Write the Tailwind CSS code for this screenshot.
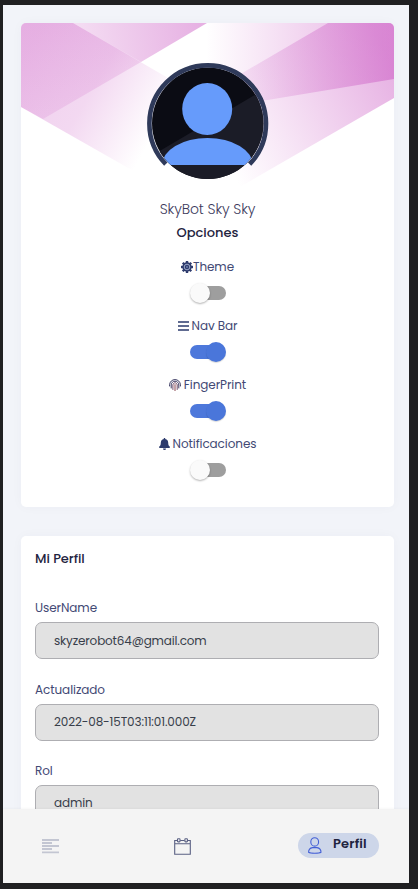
<!DOCTYPE html>
<html lang="es">
<head>
<meta charset="utf-8">
<title>Perfil</title>
<script src="https://cdn.jsdelivr.net/npm/@tailwindcss/browser@4"></script>
</head>
<body class="h-[889px] w-[418px] overflow-hidden bg-[#202022] pl-[3px] pt-[5px] font-['Poppins','Inter',sans-serif] text-[#424974]">
<div class="flex h-[878px] w-[406px] flex-col bg-[#f2f4f9]">
  <main class="h-[804px] overflow-hidden px-[18px] pt-[18px]">
    <section class="h-[484px] w-[373px] overflow-hidden rounded-[5px] bg-white shadow-[0_0_12px_rgba(60,70,110,0.03)]">
      <svg class="block" width="373" height="174" viewBox="0 0 373 174">
        <defs>
          <linearGradient id="a" gradientUnits="userSpaceOnUse" x1="10" y1="20" x2="142" y2="96"><stop offset="0" stop-color="#c850c0" stop-opacity=".28"/><stop offset=".5" stop-color="#c850c0" stop-opacity=".22"/><stop offset="1" stop-color="#c850c0" stop-opacity="0"/></linearGradient>
          <linearGradient id="b" gradientUnits="userSpaceOnUse" x1="186" y1="0" x2="60" y2="20"><stop offset="0" stop-color="#c850c0" stop-opacity=".46"/><stop offset="1" stop-color="#c850c0" stop-opacity=".2"/></linearGradient>
          <linearGradient id="b2" gradientUnits="userSpaceOnUse" x1="0" y1="0" x2="20" y2="100"><stop offset="0" stop-color="#c850c0" stop-opacity=".25"/><stop offset="1" stop-color="#c850c0" stop-opacity=".14"/></linearGradient>
          <linearGradient id="c" gradientUnits="userSpaceOnUse" x1="185" y1="0" x2="373" y2="0"><stop offset="0" stop-color="#c850c0" stop-opacity="0"/><stop offset="1" stop-color="#c850c0" stop-opacity=".46"/></linearGradient>
          <linearGradient id="d" gradientUnits="userSpaceOnUse" x1="202" y1="130" x2="373" y2="47"><stop offset="0" stop-color="#c850c0" stop-opacity="0"/><stop offset="1" stop-color="#c850c0" stop-opacity=".44"/></linearGradient>
          <clipPath id="face"><circle cx="186.7" cy="100.3" r="55.7"/></clipPath>
        </defs>
        <path d="M0 0H52L180 74L160 175L0 84Z" fill="url(#a)"/>
        <path d="M52 0H186L120 39Z" fill="url(#b)"/>
        <path d="M0 0H52L120 39L22 96L0 84Z" fill="url(#b2)"/>
        <path d="M175 0H373V56L175 89Z" fill="url(#c)"/>
        <path d="M307 0H373V75L205 172L170 80Z" fill="url(#d)"/>
        <g clip-path="url(#face)">
          <path d="M130 44H244V157H130Z" fill="#0b0c14"/>
          <path d="M130 133L244 66V160H130Z" fill="#1b1c27"/>
          <ellipse cx="186.2" cy="86" rx="25" ry="26" fill="#669bfb"/>
          <path d="M141 142A45.500 27 0 0 1 232 142Z" fill="#669bfb"/>
        </g>
        <path d="M144.800 141.200A58.300 58.300 0 1 1 228.600 141.200" fill="none" stroke="#2f3a5a" stroke-width="4.600"/>
      </svg>
      <div class="flex h-6 items-center justify-center"><span class="text-[14px] font-light tracking-[-0.1px] text-[#3c3a5c]">SkyBot Sky Sky</span></div>
      <div class="flex h-[24px] items-center justify-center text-[13px] font-medium text-[#1f2440]">Opciones</div>
      <div class="flex flex-col gap-[13px] pt-[12px]">
        <div class="flex flex-col items-center gap-[6px]">
          <div class="flex h-5 items-center text-[12px] tracking-[-0.08px]">
            <svg width="12" height="12" viewBox="0 0 12 12"><g fill="#2d3b6d"><circle cx="6" cy="6" r="4.700"/><rect x="4.800" y="0" width="2.400" height="12"/><rect y="4.800" x="0" width="12" height="2.400"/><g transform="rotate(45 6 6)"><rect x="4.800" y="0" width="2.400" height="12"/><rect y="4.800" x="0" width="12" height="2.400"/></g></g><circle cx="6" cy="6" r="2.800" fill="none" stroke="#b9c4de" stroke-width=".8"/><circle cx="6" cy="6" r="1.200" fill="#5d6f9e"/></svg>
            <span>Theme</span>
          </div>
          <div class="flex h-5 w-9 items-center"><span class="z-10 size-5 rounded-full bg-[#fafafa] shadow-[0_1px_2px_rgba(0,0,0,0.3)]"></span><span class="-ml-[18px] h-[14px] w-[34px] rounded-full bg-[#9e9e9e]"></span></div>
        </div>
        <div class="flex flex-col items-center gap-[6px]">
          <div class="flex h-5 items-center gap-[3px] text-[12px] tracking-[-0.08px]">
            <svg width="11" height="10" viewBox="0 0 11 10" stroke="#2d3b6d" stroke-width="1.300"><path d="M0 1H11M0 5H11M0 9H11"/></svg>
            <span>Nav Bar</span>
          </div>
          <div class="flex h-5 w-9 items-center"><span class="h-[14px] w-[34px] shrink-0 rounded-full bg-[#4d78db]"></span><span class="-ml-[18px] size-5 shrink-0 rounded-full bg-[#4a76da] shadow-[0_1px_1px_rgba(0,0,0,0.15)]"></span></div>
        </div>
        <div class="flex flex-col items-center gap-[6px]">
          <div class="flex h-5 items-center gap-[3px] text-[12px] tracking-[-0.08px]">
            <svg width="12" height="12" viewBox="0 0 12 12" fill="none" stroke="#3b3a62" stroke-width="1" stroke-linecap="round"><path d="M.6 7V5.800C.8 2.800 3 .6 6 .6S11.300 2.900 11.400 5.800V7"/><path d="M2.200 9V5.900C2.300 3.800 4 2.200 6 2.200S9.800 3.800 9.800 6V9"/><path d="M3.900 10.500V6C4 4.700 4.800 3.800 6 3.800S8.100 4.700 8.200 6V10.500" stroke="#74506b"/><path d="M6 5.600V11.600" stroke="#8a4650"/></svg>
            <span>FingerPrint</span>
          </div>
          <div class="flex h-5 w-9 items-center"><span class="h-[14px] w-[34px] shrink-0 rounded-full bg-[#4d78db]"></span><span class="-ml-[18px] size-5 shrink-0 rounded-full bg-[#4a76da] shadow-[0_1px_1px_rgba(0,0,0,0.15)]"></span></div>
        </div>
        <div class="flex flex-col items-center gap-[6px]">
          <div class="flex h-5 items-center gap-[3px] text-[12px] tracking-[-0.08px]">
            <svg width="11" height="12" viewBox="0 0 11 12" fill="#2d3b6d"><path d="M4.800.4a.7.7 0 0 1 1.400 0V1C8.200 1.300 9.200 2.900 9.200 4.700 9.200 7 9.800 7.800 10.700 8.600c.5.5.2 1.300-.5 1.300H.8C.1 9.900-.2 9.100.3 8.600 1.200 7.800 1.800 7 1.800 4.700 1.800 2.900 2.800 1.300 4.800 1Z"/><path d="M4 10.500H7A1.500 1.500 0 0 1 4 10.500Z"/></svg>
            <span>Notificaciones</span>
          </div>
          <div class="flex h-5 w-9 items-center"><span class="z-10 size-5 rounded-full bg-[#fafafa] shadow-[0_1px_2px_rgba(0,0,0,0.3)]"></span><span class="-ml-[18px] h-[14px] w-[34px] rounded-full bg-[#9e9e9e]"></span></div>
        </div>
      </div>
    </section>
    <section class="mt-[29px] h-[400px] w-[373px] rounded-[5px] bg-white pl-[14px] pr-[15px] pt-[13px] shadow-[0_0_12px_rgba(60,70,110,0.03)]">
      <h2 class="flex h-5 items-center text-[13px] font-medium tracking-[-0.05px] text-[#1f2440]">Mi Perfil</h2>
      <div class="mt-[29px] flex flex-col gap-[20.5px] text-[12px]">
        <div><div class="flex h-5 items-center tracking-[-0.08px]">UserName</div><div class="mt-1 flex h-[37px] items-center rounded-[7px] border border-[#aeaeb2] bg-[#e2e2e2] px-[18px] tracking-[-0.16px] text-[#383e4a]">skyzerobot64@gmail.com</div></div>
        <div><div class="flex h-5 items-center tracking-[-0.08px]">Actualizado</div><div class="mt-1 flex h-[37px] items-center rounded-[7px] border border-[#aeaeb2] bg-[#e2e2e2] px-[18px] tracking-[-0.12px] text-[#383e4a]">2022-08-15T03:11:01.000Z</div></div>
        <div><div class="flex h-5 items-center tracking-[-0.08px]">Rol</div><div class="mt-1 flex h-[37px] items-center rounded-[7px] border border-[#aeaeb2] bg-[#e2e2e2] px-[18px] pb-px tracking-[-0.12px] text-[#383e4a]">admin</div></div>
      </div>
    </section>
  </main>
  <nav class="z-10 flex h-[74px] items-center bg-[#f4f4f4] pl-[39px] shadow-[0_0_3px_rgba(0,0,0,0.06)]">
    <svg width="17" height="15" viewBox="0 0 17 15" stroke="#c3c6d2" stroke-width="1.800"><path d="M0 1H17M0 4H10M0 7H17M0 10H10M0 13.300H17"/></svg>
    <svg class="ml-[115px]" width="17" height="17" viewBox="0 0 17 17" fill="none" stroke="#5a6083" stroke-width="1.100"><path d="M3.200 2.500H.7V16.300H16.300V2.500H13.600M6.200 2.500H10.600M.7 5.700H16.300"/><rect x="3.500" y=".7" width="2.500" height="3.200" rx=".6"/><rect x="10.900" y=".7" width="2.500" height="3.200" rx=".6"/></svg>
    <div class="mb-px ml-[107px] flex h-[25px] w-[81px] items-center rounded-full bg-[#cdd6e9] pl-[10px]">
      <svg width="14" height="17" viewBox="0 0 14 17" fill="none" stroke="#435fd6" stroke-width="1.100"><ellipse cx="6.700" cy="4.900" rx="3.900" ry="4.200"/><path d="M4.500 10.600H9C11.500 11 13 13 13 15.300C11 16.600 2.500 16.600.6 15.300C.6 13 2 11 4.500 10.600Z"/></svg>
      <span class="mb-[4px] ml-[11px] text-[13px] font-semibold tracking-[0.15px] text-[#1f2440]">Perfil</span>
    </div>
  </nav>
</div>
</body>
</html>
